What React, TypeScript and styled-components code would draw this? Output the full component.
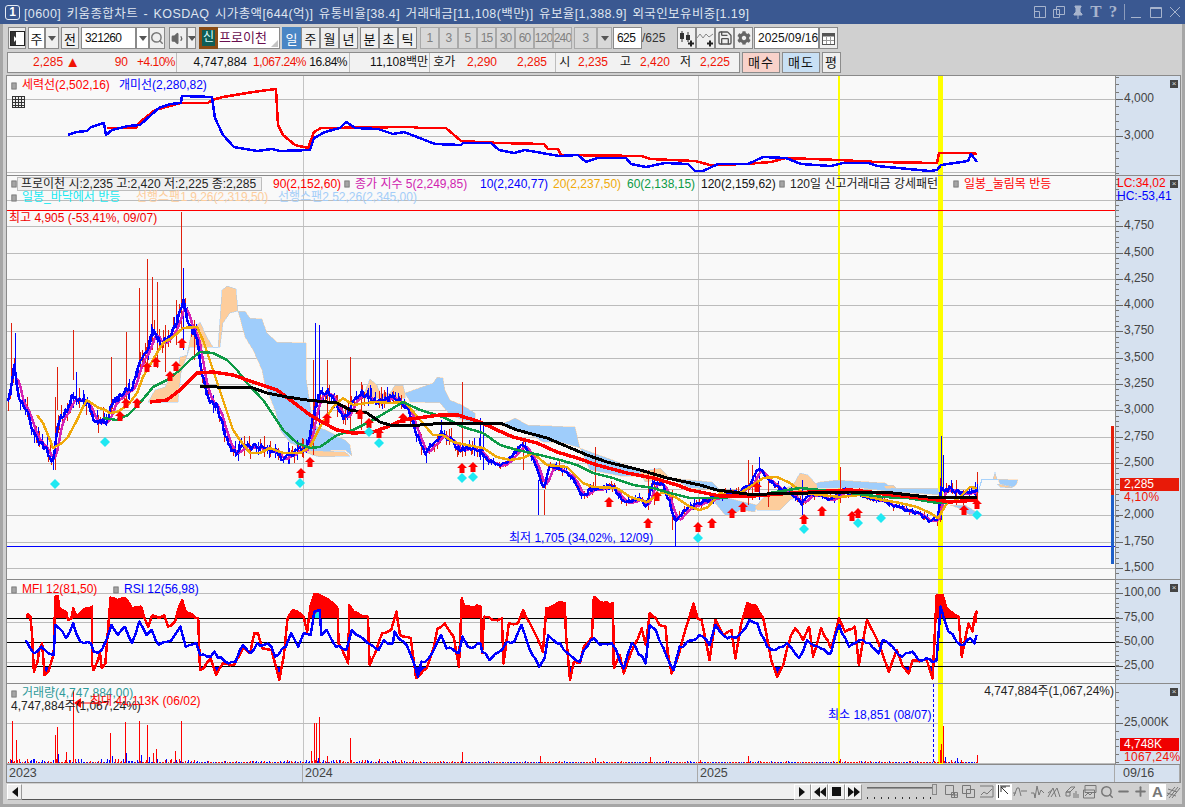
import React, { FC, ReactNode } from 'react';
import styled, { createGlobalStyle } from 'styled-components';
import { Search, Volume1, Save, Minus, Plus } from 'lucide-react';
import { FaCog } from 'react-icons/fa';

type Pt = [number, number];

const FONT = `"Liberation Sans", "Noto Sans CJK KR", sans-serif`;

const pts = (s: string): Pt[] => s.trim().split(/\s+/).map(p => p.split(',').map(Number) as Pt);
// points read off a zoomed crop of the chart
const crop = (s: string, ox: number, oy: number, sx: number, sy = 3): Pt[] =>
  pts(s).map(([x, y]) => [ox + x / sx, oy + y / sy] as Pt);
const str = (p: Pt[]) => p.map(([x, y]) => `${x.toFixed(1)},${y.toFixed(1)}`).join(' ');
const rnd = (n: number) => {
  const s = Math.sin(n * 127.1 + 3.7) * 43758.5453;
  return s - Math.floor(s);
};
const interp = (keys: Pt[], x: number) => {
  if (x <= keys[0][0]) return keys[0][1];
  for (let i = 1; i < keys.length; i++) {
    if (x <= keys[i][0]) {
      const [x0, y0] = keys[i - 1];
      const [x1, y1] = keys[i];
      return y0 + ((x - x0) / (x1 - x0)) * (y1 - y0);
    }
  }
  return keys[keys.length - 1][1];
};
// break long straight runs up so an oscillator line looks hand-drawn by ticks
const wobble = (p: Pt[], amp: number): Pt[] => {
  const out: Pt[] = [];
  p.forEach(([x, y], i) => {
    if (i > 0) {
      const [px, py] = p[i - 1];
      const n = Math.floor(Math.abs(x - px) / 3);
      for (let k = 1; k < n; k++) {
        const t = k / n;
        out.push([px + (x - px) * t, py + (y - py) * t + (rnd(i * 31 + k) - 0.5) * amp]);
      }
    }
    out.push([x, y]);
  });
  return out;
};

const closeKeys = pts(`8,405 11,385 15,360 16,383 20,400 28,410 33,433 40,443 47,450 53,463 57,433 60,420 67,410 73,395 80,400 87,402
  93,417 100,422 107,420 113,403 123,393 133,387 140,360 147,353 153,330 160,343 170,337 177,323 183,300 190,327 197,337 200,363
  207,397 217,407 223,427 233,453 240,450 247,447 260,447 273,450 283,460 293,452 307,447 315,410 320,393 330,393 337,410 347,420
  353,403 363,393 377,403 390,397 400,400 407,407 413,423 420,443 425,453 433,443 443,433 450,440 458,448 470,447 480,450 490,462
  497,465 507,462 517,450 523,445 533,457 540,477 544,488 550,465 560,468 573,477 582,497 590,490 600,487 613,487 623,500 630,503
  637,498 643,502 647,507 652,483 663,483 670,503 675,522 680,515 690,507 700,503 713,498 723,495 737,493 750,485 758,468 767,478
  777,488 788,490 802,503 807,495 820,495 833,500 843,490 860,495 873,498 883,500 893,505 907,510 920,515 928,520 938,520 941,487
  945,492 950,488 957,492 965,493 975,490 977,488`);

const spikes: [number, number, number, number][] = [
  [11, 323, 395, 0], [15, 333, 385, 1], [57, 367, 410, 0], [55, 397, 470, 0], [73, 330, 380, 0], [76, 372, 405, 1], [111, 357, 412, 0],
  [126, 332, 400, 0], [139, 288, 362, 0], [147, 259, 365, 0], [152, 277, 350, 0], [157, 282, 368, 0], [176, 300, 345, 0], [181, 212, 330, 0],
  [183, 268, 350, 1], [165, 325, 372, 0], [194, 320, 360, 0], [315, 323, 430, 1], [319, 325, 430, 1], [313, 360, 455, 0], [327, 360, 425, 0],
  [350, 357, 430, 0], [361, 382, 430, 0], [462, 382, 457, 0], [480, 418, 460, 1], [483, 425, 470, 1], [538, 480, 515, 1], [544, 490, 515, 0],
  [523, 438, 470, 0], [595, 447, 487, 0], [648, 470, 510, 0], [654, 468, 505, 0], [652, 480, 500, 1], [675, 513, 546, 1], [672, 490, 530, 0],
  [748, 460, 505, 0], [752, 465, 500, 0], [759, 457, 500, 1], [768, 480, 507, 0], [802, 480, 515, 1], [840, 467, 503, 0], [941, 436, 520, 1],
  [940, 478, 522, 0], [943, 455, 490, 1], [956, 480, 505, 0], [977, 472, 502, 0], [975, 482, 503, 1], [963, 490, 505, 0],
];

const bars = Array.from({ length: 625 }, (_, i) => {
  const x = 8 + i * 1.553;
  const mid = x > 935 && x < 945;
  const c = interp(closeKeys, x) + (mid ? 0 : (rnd(i + 50) - 0.5) * (x < 480 ? 7 : 4));
  const amp = x < 480 ? 13 : x < 930 ? 6 : 8;
  return { x, c, top: c - amp * rnd(i), bot: c + amp * 0.8 * rnd(i + 1000), red: rnd(i + 2000) > 0.45, show: rnd(i + 4000) > 0.3 };
});
const close = bars.map(b => [b.x, b.c] as Pt);
const ma5 = bars.slice(5).map((b, i) => {
  const slice = bars.slice(i + 1, i + 6);
  return [b.x, slice.reduce((a, s) => a + s.c, 0) / 5 + 1] as Pt;
});
const wickPath = (red: boolean) => {
  const all = bars.filter(b => b.show && b.red === red).map(b => `M${Math.round(b.x)} ${b.top.toFixed(0)}V${b.bot.toFixed(0)}`);
  const extra = spikes.filter(s => (s[3] === 0) === red).map(s => `M${s[0]} ${s[1]}V${s[2]}`);
  return all.concat(extra).join('');
};

const ma20 = pts(`37,415 43,423 50,440 53,448 62,443 68,437 77,420 83,407 87,400 97,407 105,410 110,413 117,412 128,405 137,393 143,377 157,353
  163,343 173,337 183,328 197,327 203,340 213,370 223,400 233,430 240,440 250,453 260,453 270,448 283,453 300,453 310,447 320,427 333,407 343,398
  353,405 367,403 377,402 390,403 405,402 410,408 420,420 427,428 433,435 443,435 453,442 467,445 483,448 497,457 510,460 523,458 533,453 547,465
  567,467 583,483 593,487 617,488 630,497 647,502 663,492 677,498 690,507 700,510 708,507 720,493 733,497 750,487 763,478 777,477 790,483 803,493
  820,495 840,497 860,495 883,500 900,503 917,507 930,513 938,518 947,503 957,500 970,487 977,488`);
const ma60 = pts(`103,418 117,420 128,415 140,403 153,387 167,380 180,370 190,360 200,352 213,353 227,360 237,370 247,383 263,400 272,413 283,430
  297,443 310,448 320,447 337,435 353,430 373,420 390,410 403,402 420,410 443,417 463,427 483,433 500,445 517,450 540,455 560,460 577,465 593,473
  613,478 633,485 653,488 670,493 690,498 713,498 733,497 753,497 770,493 800,488 850,493 883,497 907,498 938,503 950,502 977,500`);
const ma90 = pts(`150,402 167,400 180,390 197,373 213,372 233,375 253,382 277,390 293,402 310,415 322,422 337,430 353,433 373,432 387,427 403,420
  440,415 458,415 480,422 497,430 513,437 537,443 557,452 577,458 597,465 627,473 653,478 677,485 690,490 720,496 753,496 793,493 850,490 870,492
  893,495 938,500 950,502 977,500`);
const ma120 = pts(`200,386 217,387 233,387 250,387 267,393 287,397 307,400 337,403 350,410 367,413 380,422 393,426 420,425 447,423 500,423 517,430
  547,438 587,455 607,462 640,470 667,478 700,485 717,490 747,494 767,494 850,492 893,493 927,497 977,498`);

const cloudsOrange = [
  '148,402 155,390 165,387 170,377 178,370 180,357 187,355 192,330 200,322 207,337 213,347 218,347 222,290 227,286 236,289 238,311 230,313 223,323 220,347 190,347 181,373 178,402',
  '363,396 370,379 377,385 380,393 390,393 395,385 403,385 405,393 405,398 363,398',
  '300,450 345,452 350,456 320,457 312,455',
  '640,472 660,468 670,478 645,482',
  '755,507 763,498 793,485 800,473 808,475 817,485 817,490 790,500 780,510 757,510',
  '884,486 893,485 896,488 886,489', '993,479 995,472 997,479', '997,484 1013,487 1010,488 1000,487',
];
const cloudsBlue = [
  '238,311 245,311 250,318 262,319 267,333 277,342 306,343 306,377 311,410 313,425 326,430 345,440 350,445 352,456 345,450 332,450 320,456 310,451 290,443 280,430 275,410 265,385 262,370 253,350 245,337',
  '405,393 433,383 437,377 443,378 445,390 450,400 462,405 475,413 475,423 463,420 450,415 440,403 410,402',
  '500,425 515,418 528,425 575,427 580,448 563,443 543,442 527,433 517,430',
  '580,448 640,470 660,477 620,476 590,470',
  '670,478 712,482 720,490 690,488',
  '715,495 757,505 755,512 740,510 733,515 725,515 715,503',
  '820,482 837,480 885,483 893,488 938,488 940,495 893,492 860,488 800,488',
  '950,505 965,505 978,513 970,515 958,508',
  '998,479 1018,480 1016,485 1013,487 1000,484',
];

const arrows = pts(`120,416 126,403 137,403 147,367 156,362 170,376 176,366 182,343 301,473 310,462 327,418 360,414 369,423 379,433 403,418 462,468
  473,467 609,502 648,523 657,496 698,527 712,523 732,513 743,507 757,487 804,519 822,511 852,516 858,513 964,510 977,504`);
const diamonds = pts('55,484 105,442 300,483 369,432 379,443 462,478 473,477 698,538 804,529 858,523 881,518 977,515');

const powerLine = pts(`107,128 136,128 140,122 155,110 181,103 208,103 212,100 223,97 253,92 276,89 278,125 283,135 295,145 308,148 314,132 321,128
  412,127 420,128 446,128 461,141 499,143 544,144 548,149 558,149 561,155 642,156 650,159 695,161 710,165 745,164 771,162 786,158 839,160 877,162
  937,163 939,153 971,153 977,154`);
const antLine = pts(`68,135 76,132 87,131 91,127 104,123 106,135 112,130 128,126 140,125 151,115 159,108 170,104 181,103 182,96 212,97 215,118 223,135
  234,147 257,151 272,149 280,151 310,150 314,138 325,132 340,128 346,122 355,128 378,129 393,134 404,132 435,144 461,145 463,143 491,143 499,150 514,153
  525,150 559,156 578,155 586,162 597,158 626,158 631,164 646,167 665,163 688,164 695,171 703,171 718,164 748,164 763,157 786,158 801,164 831,166 843,163
  869,163 877,166 930,171 937,170 941,165 968,161 971,154 977,162`);

const mfi = wobble([
  ...crop(`75,115 85,125 90,180 95,290 105,260 110,225 118,205 125,300 135,290 150,240 155,65 162,62 165,95 185,110 190,135 200,130 205,100 215,125 240,100 258,95
    258,270 262,285 280,235 285,280 295,265 305,130 310,68 330,75 350,68 370,100 395,95 405,130 415,155 425,122 445,130 460,120 470,155 490,140 500,100 510,75
    520,110 555,130 560,285 570,280 590,250 605,300 625,265 655,270 680,220 700,235 712,175 722,175 735,220 760,225 775,285 782,315 795,240 805,130 820,105
    850,125 860,170 870,90 880,58 910,68 945,100 948,205 975,265 978,90 990,110 1030,125 1035,270 1050,235 1070,175 1095,165 1110,110 1120,180 1150,190 1165,310
    1195,280 1215,215 1225,160 1245,145 1270,185 1285,275 1293,70 1300,95 1345,95 1350,235 1355,125 1380,135 1405,130 1410,265 1425,145 1450,145 1465,105
    1500,180 1520,230 1530,100 1560,85`, 0, 575, 2.8),
  ...crop(`0,80 12,85 15,180 25,315 35,260 50,265 60,215 80,185 85,65 100,80 133,85 135,280 150,240 160,295 185,215 205,160 215,210 225,115 240,130 250,150 265,155
    270,230 280,295 290,265 320,145 335,85 345,130 355,135 375,255 390,135 410,180 430,165 440,250 455,145 470,85 490,90 510,130 530,255 545,305 560,270 580,180
    590,160 610,195 625,155 635,245 655,160 680,220 700,130 715,170 740,155 750,270 770,135 790,180 810,240 825,290 845,225 860,275 875,295 885,255 920,255
    935,310 945,60 960,60 970,100 1000,125 1008,245 1025,145 1035,170 1040,125 1045,110 1042,145`, 560, 575, 2.509),
], 3);
const rsi = wobble([
  ...crop(`72,195 85,220 95,235 115,215 135,235 150,240 155,150 175,170 185,190 205,145 215,180 235,205 255,205 262,230 285,225 300,190 312,150 330,180 350,155
    370,205 390,140 410,180 425,165 445,210 470,200 490,180 505,155 520,215 550,205 560,240 590,245 600,230 630,260 660,260 680,210 700,235 720,205 760,215 770,245
    800,215 815,175 835,215 850,175 870,180 880,110 895,105 900,180 915,165 940,215 970,225 985,165 1010,185 1040,210 1060,225 1075,195 1100,205 1105,170 1130,200
    1150,240 1170,305 1180,260 1200,250 1225,200 1235,180 1250,220 1285,235 1295,185 1310,215 1345,205 1350,230 1370,255 1405,225 1420,200 1440,200 1460,150 1480,215
    1510,275 1525,250 1535,180 1560,205`, 0, 575, 2.8),
  ...crop(`0,205 20,235 50,260 60,225 85,190 100,210 130,205 160,280 180,205 215,265 225,150 240,165 260,220 285,285 300,215 350,180 375,210 390,150 420,190 450,180
    475,135 495,145 520,215 540,225 570,205 600,250 620,195 680,235 700,150 725,215 760,195 800,235 810,195 850,240 885,230 900,255 945,255 955,95 975,170 1005,210
    1030,190 1040,205 1045,180`, 560, 575, 2.509),
], 5);

const volRed = crop(`35,123 47,180 166,165 172,140 199,215 220,30 331,158 376,125 418,123 442,135 458,218 469,207 526,212 544,123 862,240 934,212 941,130 949,128 958,110
  982,227 1051,173 1138,236 1185,240`, 0, 680, 3);
const volRed2 = pts('462,752 540,756 595,758 650,757 748,756 840,759 700,760 940,750 941,744 943,726 977,755 961,760 951,760');
const volBlue = crop('49,222 175,222 337,228 379,218 424,225 448,232 943,224 955,233', 0, 680, 3).concat(pts('945,757 951,760 957,758'));

const GlobalStyle = createGlobalStyle`
  html, body { margin: 0; padding: 0; background: #d0d0d0; }
  body { font: 12px ${FONT}; color: #111; overflow: hidden; }
`;

const Shell = styled.div`
  width: 1185px;
  height: 807px;
  box-sizing: border-box;
  display: flex;
  flex-direction: column;
  background: #d0d0d0;
  border-bottom: 3px solid #a6a6a6;
`;

const TitleBar = styled.div`
  height: 24px;
  flex: none;
  display: flex;
  align-items: center;
  background: #3a5891;
  color: #dfe5ef;
  padding: 0 3px 0 5px;
`;

const WinBadge = styled.div`
  width: 13px;
  height: 13px;
  border: 1px solid #e8edf5;
  border-radius: 3px;
  color: #fff;
  font-size: 12px;
  font-weight: 700;
  line-height: 13px;
  text-align: center;
  margin-right: 4px;
`;

const TitleText = styled.div`
  flex: 1;
  font-size: 12.5px;
  letter-spacing: 0.4px;
  word-spacing: 1.6px;
  white-space: nowrap;
`;

const TitleTools = styled.div`
  display: flex;
  align-items: center;
  gap: 5px;
  color: #a7b4cd;
  svg { display: block; }
`;

const TitleGlyph = styled.span`
  font: 700 17px "Liberation Serif", serif;
  width: 12px;
  text-align: center;
  line-height: 18px;
`;

const TitleSep = styled.div`
  width: 1px;
  height: 16px;
  background: #8c9cbc;
`;

const Body = styled.div`
  flex: 1;
  min-height: 0;
  display: flex;
  flex-direction: column;
  border-left: 3px solid #a6a6a6;
  border-right: 3px solid #a6a6a6;
  padding: 0 1px 0 3px;
`;

const ToolRow = styled.div`
  height: 22px;
  margin: 3px 0 3px 2px;
  display: flex;
  flex: none;
`;

type BtnKind = 'plain' | 'white' | 'active' | 'off';

const Btn = styled.div<{ $w: number; $ml?: number; $kind?: BtnKind }>`
  width: ${p => p.$w}px;
  margin-left: ${p => p.$ml || 0}px;
  box-sizing: border-box;
  flex: none;
  display: flex;
  align-items: center;
  justify-content: center;
  border: 1px solid ${p => (p.$kind === 'active' ? '#4a86c5' : p.$kind === 'off' ? '#a9a9a9' : '#8a8a8a')};
  background: ${p => (p.$kind === 'white' ? '#fff' : p.$kind === 'active' ? '#4a86c5' : p.$kind === 'off' ? '#d8d8d8' : '#efefef')};
  color: ${p => (p.$kind === 'active' ? '#fff' : p.$kind === 'off' ? '#808080' : '#111')};
  font-size: ${p => (p.$kind === 'off' ? 12 : 13)}px;
  letter-spacing: ${p => (p.$kind === 'off' ? -0.8 : 0)}px;
  white-space: nowrap;
  overflow: hidden;
`;

const Caret = styled.i`
  width: 0;
  height: 0;
  border-left: 4px solid transparent;
  border-right: 4px solid transparent;
  border-top: 5px solid #555;
`;

const CodeField = styled(Btn)<{ $tight?: boolean }>`
  justify-content: flex-start;
  padding-left: 3px;
  font-size: 12px;
  letter-spacing: ${p => (p.$tight ? -0.6 : 0)}px;
`;

const SideBadge = styled.div`
  width: 19px;
  margin-left: 3px;
  box-sizing: border-box;
  flex: none;
  border: 3px solid #8a4b14;
  background: #0f5d56;
  color: #dff;
  font-size: 12px;
  line-height: 15px;
  text-align: center;
`;

const NameField = styled.div`
  width: 62px;
  position: relative;
  box-sizing: border-box;
  flex: none;
  background: #fff;
  border: 1px solid #8a8a8a;
  border-left: 0;
  color: #6a0f4f;
  font-size: 13px;
  line-height: 20px;
  padding-left: 1px;
  white-space: nowrap;
  &::after {
    content: '';
    position: absolute;
    right: 1px;
    bottom: 1px;
    border-left: 7px solid transparent;
    border-bottom: 7px solid #c4c4c4;
  }
`;

const PlainText = styled.div<{ $w: number }>`
  width: ${p => p.$w}px;
  flex: none;
  color: #333;
  line-height: 22px;
  font-size: 12px;
`;

const InfoRow = styled.div`
  height: 21px;
  margin: 0 0 2px 1px;
  display: flex;
  flex: none;
`;

const InfoPanel = styled.div`
  width: 733px;
  flex: none;
  box-sizing: border-box;
  display: flex;
  background: #f2f2f2;
  border: 1px solid #8c8c8c;
`;

const Cell = styled.div<{ $w: number; $left?: boolean; $red?: boolean; $sep?: boolean; $tight?: boolean }>`
  width: ${p => p.$w}px;
  box-sizing: border-box;
  flex: none;
  line-height: 19px;
  text-align: ${p => (p.$left ? 'left' : 'right')};
  color: ${p => (p.$red ? '#f01405' : '#111')};
  border-right: ${p => (p.$sep ? '1px solid #bdbdbd' : '0')};
  letter-spacing: ${p => (p.$tight ? -0.5 : 0)}px;
  white-space: nowrap;
  padding-right: ${p => (p.$sep ? 1 : 0)}px;
`;

const UpMark = styled.span`
  font-size: 15px;
  line-height: 14px;
  margin-left: 2px;
  vertical-align: -1px;
`;

const TradeBtn = styled.div<{ $bg: string; $w: number }>`
  width: ${p => p.$w}px;
  margin-left: 2px;
  flex: none;
  box-sizing: border-box;
  border: 1px solid #8c8c8c;
  background: ${p => p.$bg};
  font-size: 13px;
  letter-spacing: 1px;
  line-height: 19px;
  text-align: center;
`;

const Frame = styled.div`
  width: 1175px;
  flex: none;
  box-sizing: border-box;
  border: 1px solid #8a8a8a;
  background: #f9f9f9;
`;

const PaneRow = styled.div<{ $h: number }>`
  height: ${p => p.$h}px;
  box-sizing: border-box;
  display: flex;
  border-bottom: 1px solid #8a8a8a;
`;

const Plot = styled.div`
  width: 1108px;
  flex: none;
  position: relative;
  overflow: hidden;
`;

const PlotSvg = styled.svg`
  display: block;
`;

const AxisBox = styled.div`
  flex: 1;
  position: relative;
  background: #d6e1ef;
  border-left: 1px solid #8a8a8a;
  overflow: hidden;
`;

const AxisTicks = styled.svg`
  position: absolute;
  left: 0;
  top: 0;
`;

const AxisLabel = styled.span`
  position: absolute;
  left: 8px;
  color: #444;
  line-height: 14px;
  white-space: nowrap;
`;

const CloseBox = styled.div`
  position: absolute;
  right: 2px;
  top: 4px;
  width: 8px;
  height: 8px;
  background: #444;
  color: #ddd;
  font-size: 8px;
  line-height: 8px;
  text-align: center;
`;

const PriceTag = styled.div`
  position: absolute;
  left: 4px;
  right: 1px;
  height: 13px;
  padding-left: 4px;
  background: ${p => p.color};
  color: #fff;
  line-height: 13px;
`;

const RedNote = styled.span`
  position: absolute;
  left: 8px;
  color: #f01405;
  line-height: 13px;
  letter-spacing: 0.3px;
`;

const AxisCorner = styled.div<{ $hc?: boolean }>`
  position: absolute;
  left: 1px;
  top: ${p => (p.$hc ? 14 : 1)}px;
  height: 13px;
  padding-right: 6px;
  color: ${p => (p.$hc ? '#0000ff' : '#f00')};
  line-height: 13px;
`;

const LegendStack = styled.div<{ $top?: number }>`
  position: absolute;
  left: 4px;
  top: ${p => p.$top ?? 3}px;
  display: flex;
  flex-direction: column;
`;

const LegendRow = styled.div<{ $h?: number }>`
  height: ${p => p.$h || 13}px;
  display: flex;
  align-items: center;
`;

const Marker = styled.i`
  width: 4px;
  height: 6px;
  margin-right: 5px;
  flex: none;
  background: #a5a5a5;
  border: 1px solid #7c7c7c;
  box-sizing: content-box;
  transform: scale(0.85);
`;

const LegendBox = styled.div`
  width: 245px;
  height: 14px;
  box-sizing: border-box;
  flex: none;
  margin-left: -5px;
  padding-left: 3px;
  border: 1px solid #bdbdbd;
  background: #f0f0f0;
  color: #222;
  line-height: 12px;
  white-space: nowrap;
`;

const LegendItem = styled.span<{ $w: number; $c: string; $ml?: number }>`
  width: ${p => p.$w}px;
  margin-left: ${p => p.$ml || 0}px;
  flex: none;
  color: ${p => p.$c};
  line-height: 13px;
  white-space: nowrap;
`;

const Note = styled.span<{ $x: number; $y: number; $c: string; $right?: boolean }>`
  position: absolute;
  ${p => (p.$right ? `right: ${p.$x}px;` : `left: ${p.$x}px;`)}
  top: ${p => p.$y}px;
  color: ${p => p.$c};
  line-height: 14px;
  white-space: nowrap;
`;

const DateBar = styled.div`
  height: 17px;
  display: flex;
  background: #d6e1ef;
  color: #444;
  line-height: 17px;
  font-size: 12.5px;
`;

const DateCell = styled.div<{ $w: number; $line?: boolean }>`
  width: ${p => p.$w}px;
  box-sizing: border-box;
  flex: none;
  padding-left: ${p => (p.$line ? 8 : 2)}px;
  border-right: 1px solid #a9a9a9;
`;

const BottomBar = styled.div`
  height: 17px;
  flex: none;
  display: flex;
  align-items: center;
  margin-left: 1px;
`;

const ScrollBtn = styled.div<{ $w: number }>`
  width: ${p => p.$w}px;
  height: 16px;
  box-sizing: border-box;
  flex: none;
  display: flex;
  align-items: center;
  justify-content: center;
  background: #efefef;
  border: 1px solid #999;
  border-top-color: #fff;
  border-left-color: #fff;
  color: #111;
  svg { display: block; }
`;

const ScrollTrack = styled.div`
  flex: 1;
  height: 16px;
  background: #f0f0f0;
  border-bottom: 1px solid #555;
  box-sizing: border-box;
`;

const Slider = styled.div`
  width: 70px;
  height: 16px;
  margin: 0 6px 0 5px;
  flex: none;
  position: relative;
  background:
    linear-gradient(#555, #aaa) 0 3px / 100% 2px no-repeat,
    repeating-linear-gradient(90deg, #333 0 1px, transparent 1px 7px) 0 13px / 100% 2px no-repeat;
  &::after {
    content: '';
    position: absolute;
    right: 0;
    top: 0;
    width: 3px;
    height: 9px;
    background: #ccc;
    border: 1px solid #888;
  }
`;

const Tool = styled.div<{ $w?: number; $on?: boolean }>`
  width: ${p => p.$w || 17}px;
  height: 16px;
  flex: none;
  display: flex;
  align-items: center;
  justify-content: center;
  background: ${p => (p.$on ? '#fff' : 'transparent')};
  color: #777;
  font-weight: 700;
  font-size: 15px;
  svg { display: block; }
`;

const Line: FC<{ p: Pt[]; c: string; w?: number }> = ({ p, c, w = 2.5 }) => (
  <polyline points={ str(p) } fill="none" stroke={ c } strokeWidth={ w } shapeRendering="crispEdges" strokeLinejoin="round"/>
);

const HLine: FC<{ y: number; c?: string }> = ({ y, c = '#bcbcbc' }) => (
  <line x1="7" x2="1115" y1={ y + 0.5 } y2={ y + 0.5 } stroke={ c } shapeRendering="crispEdges"/>
);

const PaneBack: FC<{ top: number; h: number; lines?: number[] }> = ({ top, h, lines = [] }) => (
  <>
    { [303, 698].map(x => (
      <line key={ x } x1={ x + 0.5 } x2={ x + 0.5 } y1={ top } y2={ top + h } stroke="#c4c4c4" shapeRendering="crispEdges"/>
    )) }
    { lines.map(y => <HLine key={ y } y={ y }/>) }
    <rect x="838" y={ top } width="2" height={ h } fill="#ffff00"/>
    <rect x="938" y={ top } width="5" height={ h } fill="#ffff00"/>
  </>
);

interface ITick { y: number; label?: string }

const Axis: FC<{ top: number; h: number; ticks: ITick[]; minor: number; children?: ReactNode }> = ({ top, h, ticks, minor, children }) => {
  const first = ticks[0].y;
  const minorY: number[] = [];
  for (let y = first - 40 * minor; y < top + h; y += minor) if (y > top) minorY.push(y);
  return (
    <AxisBox>
      <AxisTicks width="12" height={ h } viewBox={ `0 ${top} 12 ${h}` }>
        { minorY.map(y => <line key={ y } x1="0" x2="3" y1={ Math.round(y) + 0.5 } y2={ Math.round(y) + 0.5 } stroke="#777"/>) }
        { ticks.map(t => <line key={ t.y } x1="0" x2="7" y1={ Math.round(t.y) + 0.5 } y2={ Math.round(t.y) + 0.5 } stroke="#666"/>) }
      </AxisTicks>
      { ticks.filter(t => t.label).map(t => (
        <AxisLabel key={ t.y } style={ { top: t.y - top - 8 } }>{ t.label }</AxisLabel>
      )) }
      { children }
      <CloseBox>×</CloseBox>
    </AxisBox>
  );
};

const priceY = (p: number) => 568 - ((p - 1500) / 250) * 26.29;
// 5,000 sits under the HC readout and 2,250 under the price tag, so neither label shows
const priceTicks: ITick[] = Array.from({ length: 15 }, (_, i) => {
  const p = 5000 - i * 250;
  return { y: priceY(p), label: p === 5000 || p === 2250 ? undefined : p.toLocaleString('en-US') };
});

const arrowPoints = ([x, y]: Pt) =>
  `${x},${y - 5} ${x + 5},${y} ${x + 2.5},${y} ${x + 2.5},${y + 5} ${x - 2.5},${y + 5} ${x - 2.5},${y} ${x - 5},${y}`;
const diamondPoints = ([x, y]: Pt) => `${x},${y - 5} ${x + 5},${y} ${x},${y + 5} ${x - 5},${y}`;

const TopPane: FC = () => (
  <PaneRow $h={ 100 }>
    <Plot>
      <PlotSvg width="1108" height="99" viewBox="7 76 1108 99">
        <PaneBack top={ 76 } h={ 99 } lines={ [99, 136, 172] }/>
        <Line p={ powerLine } c="#ff0000"/>
        <Line p={ antLine } c="#0000ff"/>
        <g stroke="#333" fill="#eee" shapeRendering="crispEdges">
          <rect x="12.5" y="96.5" width="12" height="11"/>
          <path d="M15.5 97v10M18.5 97v10M21.5 97v10M13 99.5h11M13 102.5h11M13 105.5h11" fill="none"/>
        </g>
      </PlotSvg>
      <LegendStack>
        <LegendRow>
          <Marker/>
          <LegendItem $w={ 97 } $c="#ff0000">세력선(2,502,16)</LegendItem>
          <LegendItem $w={ 100 } $c="#0000ff">개미선(2,280,82)</LegendItem>
        </LegendRow>
      </LegendStack>
    </Plot>
    <Axis top={ 76 } h={ 99 } minor={ 7.4 } ticks={ [{ y: 99, label: '4,000' }, { y: 136, label: '3,000' }] }/>
  </PaneRow>
);

const MainPane: FC = () => (
  <PaneRow $h={ 404 }>
    <Plot>
      <PlotSvg width="1108" height="403" viewBox="7 176 1108 403">
        <PaneBack top={ 176 } h={ 403 } lines={ priceTicks.map(t => Math.round(t.y)) }/>
        <HLine y={ 210 } c="#ff0000"/>
        <HLine y={ 546 } c="#0000ff"/>
        <g stroke="none" shapeRendering="crispEdges">
          { cloudsBlue.map(p => <polygon key={ p } points={ p } fill="#9fcdfb" stroke="#ffcf9f" strokeWidth="0.5"/>) }
          { cloudsOrange.map(p => <polygon key={ p } points={ p } fill="#fdcd9c" stroke="#9fcdfb" strokeWidth="0.5"/>) }
        </g>
        <Line p={ pts('978,493 982,479 998,479') } c="#a8d2fb" w={ 1 }/>
        <path d={ wickPath(true) } stroke="#e0200c" fill="none" shapeRendering="crispEdges"/>
        <path d={ wickPath(false) } stroke="#0000ff" fill="none" shapeRendering="crispEdges"/>
        <Line p={ ma5 } c="#d424b4"/>
        <Line p={ close } c="#0000ff"/>
        <Line p={ ma20 } c="#f0a90a"/>
        <Line p={ ma60 } c="#0d9a45"/>
        <Line p={ ma90 } c="#ff0000" w={ 3.5 }/>
        <Line p={ ma120 } c="#000000" w={ 3 }/>
        { arrows.map((p, i) => <polygon key={ i } points={ arrowPoints(p) } fill="#ff0000"/>) }
        { diamonds.map((p, i) => <polygon key={ i } points={ diamondPoints(p) } fill="#1fe8f2"/>) }
        <rect x="1111" y="426" width="3" height="69" fill="#e2200c"/>
        <rect x="1111" y="495" width="3" height="69" fill="#1e5fc8"/>
      </PlotSvg>
      <LegendStack $top={ 1 }>
        <LegendRow $h={ 14 }>
          <Marker/>
          <LegendBox>프로이천 시:2,235 고:2,420 저:2,225 종:2,285</LegendBox>
          <LegendItem $w={ 71 } $ml={ 11 } $c="#ff0000">90(2,152,60)</LegendItem>
          <Marker/>
          <LegendItem $w={ 125 } $c="#d01fb0">종가 지수 5(2,249,85)</LegendItem>
          <LegendItem $w={ 73 } $c="#0000ff">10(2,240,77)</LegendItem>
          <LegendItem $w={ 74 } $c="#f0a90a">20(2,237,50)</LegendItem>
          <LegendItem $w={ 74 } $c="#0d9a45">60(2,138,15)</LegendItem>
          <LegendItem $w={ 78 } $c="#111">120(2,159,62)</LegendItem>
          <Marker/>
          <LegendItem $w={ 163 } $c="#222">120일 신고거래대금 강세패턴</LegendItem>
          <Marker/>
          <LegendItem $w={ 95 } $c="#ff0000">일봉_눌림목 반등</LegendItem>
        </LegendRow>
        <LegendRow>
          <Marker/>
          <LegendItem $w={ 114 } $c="#19e8f0">일봉_바닥에서 반등</LegendItem>
          <LegendItem $w={ 142 } $c="#fdcd9c">선행스팬1 9,26(2,319,50)</LegendItem>
          <LegendItem $w={ 142 } $c="#a3cdf8">선행스팬2 52,26(2,345,00)</LegendItem>
        </LegendRow>
      </LegendStack>
      <Note $x={ 2 } $y={ 35 } $c="#f00000">최고 4,905 (-53,41%, 09/07)</Note>
      <Note $x={ 502 } $y={ 355 } $c="#0000ff">최저 1,705 (34,02%, 12/09)</Note>
    </Plot>
    <Axis top={ 176 } h={ 403 } minor={ 5.26 } ticks={ priceTicks }>
      <AxisCorner>LC:34,02</AxisCorner>
      <AxisCorner $hc>HC:-53,41</AxisCorner>
      <PriceTag color="#e81a08" style={ { top: 302 } }>2,285</PriceTag>
      <RedNote style={ { top: 315 } }>4,10%</RedNote>
    </Axis>
  </PaneRow>
);

const MfiPane: FC = () => (
  <PaneRow $h={ 104 }>
    <Plot>
      <PlotSvg width="1108" height="103" viewBox="7 580 1108 103">
        <defs>
          <clipPath id="overbought"><rect x="7" y="580" width="1108" height="38"/></clipPath>
          <clipPath id="oversold"><rect x="7" y="666" width="1108" height="18"/></clipPath>
        </defs>
        <PaneBack top={ 580 } h={ 103 } lines={ [593, 622, 662] }/>
        <polygon points={ `${str(mfi)} 977,618 26,618` } fill="#ff0000" clipPath="url(#overbought)" shapeRendering="crispEdges"/>
        <polygon points={ `${str(mfi)} 977,666 26,666` } fill="#0000ff" clipPath="url(#oversold)" shapeRendering="crispEdges"/>
        <polygon points="313,618 316,613 319,610 320,618" fill="#17e6ef"/>
        <HLine y={ 618 } c="#000"/>
        <HLine y={ 642 } c="#000"/>
        <HLine y={ 666 } c="#000"/>
        <Line p={ mfi } c="#ff0000"/>
        <Line p={ rsi } c="#0000ff"/>
      </PlotSvg>
      <LegendStack>
        <LegendRow>
          <Marker/>
          <LegendItem $w={ 91 } $c="#ff0000">MFI 12(81,50)</LegendItem>
          <Marker/>
          <LegendItem $w={ 100 } $c="#0000ff">RSI 12(56,98)</LegendItem>
        </LegendRow>
      </LegendStack>
    </Plot>
    <Axis top={ 580 } h={ 103 } minor={ 4.8 } ticks={ [
      { y: 593, label: '100,00' }, { y: 618, label: '75,00' }, { y: 642, label: '50,00' }, { y: 666, label: '25,00' },
    ] }/>
  </PaneRow>
);

const VolumePane: FC = () => {
  const small = bars.map((b, i) => {
    const scale = b.x < 200 ? 4 : b.x < 303 ? 2 : b.x < 420 ? 3 : 1.2;
    const r = rnd(i + 3000);
    return { x: Math.round(b.x), y: 763 - Math.ceil(r * r * scale), red: b.red };
  });
  const smallPath = (red: boolean) => small.filter(s => s.red === red).map(s => `M${s.x} ${s.y}V763`).join('');
  const tall = (list: Pt[]) => list.map(([x, y]) => `M${Math.round(x)} ${Math.round(y)}V763`).join('');
  return (
    <PaneRow $h={ 81 }>
      <Plot>
        <PlotSvg width="1108" height="80" viewBox="7 684 1108 80">
          <PaneBack top={ 684 } h={ 80 } lines={ [723, 763] }/>
          <path d={ smallPath(false) } stroke="#0000ff" shapeRendering="crispEdges"/>
          <path d={ smallPath(true) } stroke="#ff0000" shapeRendering="crispEdges"/>
          <path d={ tall(volBlue) } stroke="#0000ff" shapeRendering="crispEdges"/>
          <path d={ tall(volRed) + tall(volRed2) } stroke="#ff0000" shapeRendering="crispEdges"/>
          <line x1="933.5" x2="933.5" y1="684" y2="763" stroke="#0000ff" strokeDasharray="3 2"/>
          <path d="M76 703H102" stroke="#ff0000"/>
          <polygon points="74,703 81,698 81,708" fill="#ff0000"/>
        </PlotSvg>
        <LegendStack>
          <LegendRow>
            <Marker/>
            <LegendItem $w={ 130 } $c="#2f9a9a">거래량(4,747,884,00)</LegendItem>
          </LegendRow>
        </LegendStack>
        <Note $x={ 4 } $y={ 15 } $c="#222">4,747,884주(1,067,24%)</Note>
        <Note $x={ 83 } $y={ 10 } $c="#ff0000">최대 41,113K (06/02)</Note>
        <Note $x={ 1 } $y={ 0 } $c="#222" $right>4,747,884주(1,067,24%)</Note>
        <Note $x={ 821 } $y={ 24 } $c="#0000ff">최소 18,851 (08/07)</Note>
      </Plot>
      <Axis top={ 684 } h={ 80 } minor={ 7.8 } ticks={ [{ y: 723, label: '25,000K' }] }>
        <PriceTag color="#f00000" style={ { top: 54 } }>4,748K</PriceTag>
        <RedNote style={ { top: 67 } }>1067,24%</RedNote>
      </Axis>
    </PaneRow>
  );
};

const LayoutIcon = () => (
  <svg width="15" height="15" viewBox="0 0 15 15">
    <rect x="0.5" y="0.5" width="14" height="14" fill="#fff" stroke="#222"/>
    <rect x="1" y="1" width="5" height="13" fill="#333"/>
    <path d="M7 8l-3-3v6z" fill="#fff"/>
  </svg>
);

const CandleAdd = () => (
  <svg width="17" height="17" viewBox="0 0 17 17">
    <path d="M4 1v11M10 2v10" stroke="#333"/>
    <rect x="2" y="3" width="4" height="6" fill="#333"/>
    <rect x="8" y="5" width="4" height="5" fill="#333"/>
    <path d="M10 13.5h6M13 10.5v6" stroke="#222" strokeWidth="2"/>
  </svg>
);

const LineAdd = () => (
  <svg width="17" height="17" viewBox="0 0 17 17">
    <path d="M0 8l3-4 3 4 3-4 3 3 4-3" fill="none" stroke="#888"/>
    <path d="M10 13.5h6M13 10.5v6" stroke="#222" strokeWidth="2"/>
  </svg>
);

const CalendarIcon = () => (
  <svg width="13" height="13" viewBox="0 0 13 13">
    <rect x="0.5" y="1.5" width="12" height="11" fill="#fff" stroke="#555"/>
    <rect x="0.5" y="1.5" width="12" height="3" fill="#555"/>
    <path d="M4.5 5v7M8.5 5v7M1 8.5h11" stroke="#999"/>
  </svg>
);

const Glyph: FC<{ d: string; w?: number; c?: string }> = ({ d, w = 15, c = '#777' }) => (
  <svg width={ w } height="15" viewBox={ `0 0 ${w} 15` }>
    <path d={ d } fill="none" stroke={ c }/>
  </svg>
);

const TitleIcon: FC<{ d: string; fill?: boolean }> = ({ d, fill }) => (
  <svg width="14" height="14" viewBox="0 0 14 14">
    <path d={ d } fill={ fill ? 'currentColor' : 'none' } stroke="currentColor"/>
  </svg>
);

const App: FC = () => (
  <Shell>
    <GlobalStyle/>
    <TitleBar>
      <WinBadge>1</WinBadge>
      <TitleText>[0600] 키움종합차트 - KOSDAQ 시가총액[644(억)] 유통비율[38.4] 거래대금[11,108(백만)] 유보율[1,388.9] 외국인보유비중[1.19]</TitleText>
      <TitleTools>
        <TitleIcon d="M1.5 1.5h11v11h-11zM1.5 6.5h5v6"/>
        <TitleIcon d="M4.5 1.5h8v8h-8zM1.5 4.5h6v8h-6z"/>
        <TitleIcon d="M4 1h6v1l-1 1v4l2 2v1H3V9l2-2V3L4 2zM7 10v4" fill/>
        <TitleGlyph>T</TitleGlyph>
        <TitleGlyph>?</TitleGlyph>
        <TitleSep/>
        <TitleIcon d="M1 12.5h10"/>
        <TitleIcon d="M1.5 2.5h11v10h-11zM1.5 3.5h11"/>
        <TitleIcon d="M2 2l10 10M12 2L2 12"/>
      </TitleTools>
    </TitleBar>
    <Body>
      <ToolRow>
        <Btn $w={ 18 } $ml={ 0 }><LayoutIcon/></Btn>
        <Btn $w={ 17 } $ml={ 2 } $kind="white">주</Btn>
        <Btn $w={ 14 }><Caret/></Btn>
        <Btn $w={ 18 } $ml={ 2 }>전</Btn>
        <CodeField $w={ 55 } $ml={ 2 } $kind="white" $tight>321260</CodeField>
        <Btn $w={ 13 } $kind="white"><Caret/></Btn>
        <Btn $w={ 16 }><Search size={ 14 } color="#777" strokeWidth={ 2.5 }/></Btn>
        <Btn $w={ 18 } $ml={ 4 }><Volume1 size={ 15 } color="#666" fill="#666"/></Btn>
        <Btn $w={ 9 }><Caret/></Btn>
        <SideBadge>신</SideBadge>
        <NameField>프로이천</NameField>
        <Btn $w={ 19 } $ml={ 2 } $kind="active">일</Btn>
        <Btn $w={ 19 }>주</Btn>
        <Btn $w={ 19 }>월</Btn>
        <Btn $w={ 19 }>년</Btn>
        <Btn $w={ 19 } $ml={ 2 }>분</Btn>
        <Btn $w={ 19 }>초</Btn>
        <Btn $w={ 19 }>틱</Btn>
        <Btn $w={ 19 } $ml={ 3 } $kind="off">1</Btn>
        { ['3', '5', '15', '30', '60', '120', '240'].map(t => <Btn key={ t } $w={ 19 } $kind="off">{ t }</Btn>) }
        <Btn $w={ 23 } $ml={ 2 } $kind="off">3</Btn>
        <Btn $w={ 15 } $kind="off"><Caret/></Btn>
        <CodeField $w={ 29 } $ml={ 1 } $kind="white" $tight>625</CodeField>
        <PlainText $w={ 35 }>/625</PlainText>
        <Btn $w={ 19 }><CandleAdd/></Btn>
        <Btn $w={ 19 }><LineAdd/></Btn>
        <Btn $w={ 19 }><Save size={ 16 } color="#555" strokeWidth={ 2 }/></Btn>
        <Btn $w={ 19 }><FaCog size={ 14 } color="#666"/></Btn>
        <CodeField $w={ 65 } $ml={ 1 } $kind="white">2025/09/16</CodeField>
        <Btn $w={ 19 }><CalendarIcon/></Btn>
      </ToolRow>
      <InfoRow>
        <InfoPanel>
          <Cell $w={ 72 } $red>2,285<UpMark>▲</UpMark></Cell>
          <Cell $w={ 48 } $red>90</Cell>
          <Cell $w={ 49 } $red $sep $tight>+4.10%</Cell>
          <Cell $w={ 70 }>4,747,884</Cell>
          <Cell $w={ 59 } $red $tight>1,067.24%</Cell>
          <Cell $w={ 41 } $tight>16.84%</Cell>
          <Cell $w={ 3 } $sep/>
          <Cell $w={ 80 } $sep>11,108백만</Cell>
          <Cell $w={ 35 } $left>&nbsp;호가</Cell>
          <Cell $w={ 32 } $red>2,290</Cell>
          <Cell $w={ 50 } $red>2,285</Cell>
          <Cell $w={ 9 } $sep/>
          <Cell $w={ 14 } $left>&nbsp;시</Cell>
          <Cell $w={ 38 } $red>2,235</Cell>
          <Cell $w={ 23 }>고</Cell>
          <Cell $w={ 39 } $red>2,420</Cell>
          <Cell $w={ 21 }>저</Cell>
          <Cell $w={ 39 } $red>2,225</Cell>
        </InfoPanel>
        <TradeBtn $w={ 38 } $bg="#f8d2ca">매수</TradeBtn>
        <TradeBtn $w={ 38 } $bg="#c8e0f5">매도</TradeBtn>
        <TradeBtn $w={ 19 } $bg="#efefef">평</TradeBtn>
      </InfoRow>
      <Frame>
        <TopPane/>
        <MainPane/>
        <MfiPane/>
        <VolumePane/>
        <DateBar>
          <DateCell $w={ 296 }>2023</DateCell>
          <DateCell $w={ 395 }>2024</DateCell>
          <DateCell $w={ 417 }>2025</DateCell>
          <DateCell $w={ 65 } $line>09/16</DateCell>
        </DateBar>
      </Frame>
      <BottomBar>
        <ScrollBtn $w={ 15 }>
          <svg width="7" height="10"><path d="M7 0v10L1 5z" fill="#111"/></svg>
        </ScrollBtn>
        <ScrollTrack/>
        <ScrollBtn $w={ 17 }>
          <svg width="7" height="10"><path d="M0 0v10l6-5z" fill="#111"/></svg>
        </ScrollBtn>
        <ScrollBtn $w={ 17 }>
          <svg width="12" height="10"><path d="M6 0v10L0 5zM12 0v10L6 5z" fill="#111"/></svg>
        </ScrollBtn>
        <ScrollBtn $w={ 17 }>
          <svg width="9" height="9"><rect width="9" height="9" fill="#111"/></svg>
        </ScrollBtn>
        <ScrollBtn $w={ 17 }>
          <svg width="12" height="10"><path d="M0 0v10l6-5zM6 0v10l6-5z" fill="#111"/></svg>
        </ScrollBtn>
        <Slider/>
        <Tool><Glyph d="M1.5 1.5h8v9h-8zM7.5 8.5h6v5h-6zM10.5 8.5v5M7.5 11h6"/></Tool>
        <Tool><Glyph d="M1.5 1.5h8v8h-8zM5.5 5.5h8v8h-8z"/></Tool>
        <Tool $w={ 19 }><Glyph d="M1 2h13M1 13h13M14 2v11M2 11l3-3 3 2 5-5" w={ 15 }/></Tool>
        <Tool $w={ 16 } $on><Glyph d="M1.5 1v13M3 2h10M4 3l7 7M4 3v5M4 3h5" c="#333"/></Tool>
        <Tool><Glyph d="M1 12l3-8h2l2 8M8 7h6M0 9h3"/></Tool>
        <Tool><Glyph d="M1 9h3l1 5 2-12 2 9 2-5 3 3"/></Tool>
        <Tool><Glyph d="M1 13l5-9 3 9M4 13l6-9 3 9M1 9l4-3"/></Tool>
        <Tool><Glyph d="M2 8l5-5h4l-5 5zM2 8v4h4V8zM10 14V9M12 14V7M14 14V10"/></Tool>
        <Tool $w={ 18 }><Glyph d="M3 1.5h11v7H3zM1.5 6h11v8h-11zM3 12l3-3 2 2 3-3"/></Tool>
        <Tool><Search size={ 14 } color="#777" strokeWidth={ 2.5 }/></Tool>
        <Tool><Minus size={ 15 } color="#777" strokeWidth={ 3 }/></Tool>
        <Tool><Plus size={ 15 } color="#777" strokeWidth={ 3 }/></Tool>
        <Tool $on>A</Tool>
        <Tool $w={ 15 }><Glyph d="M1 12l8-9M3 14l9-11M6 14l8-10M1 9l9 3M2 5l9 3"/></Tool>
      </BottomBar>
    </Body>
  </Shell>
);

export default App;
